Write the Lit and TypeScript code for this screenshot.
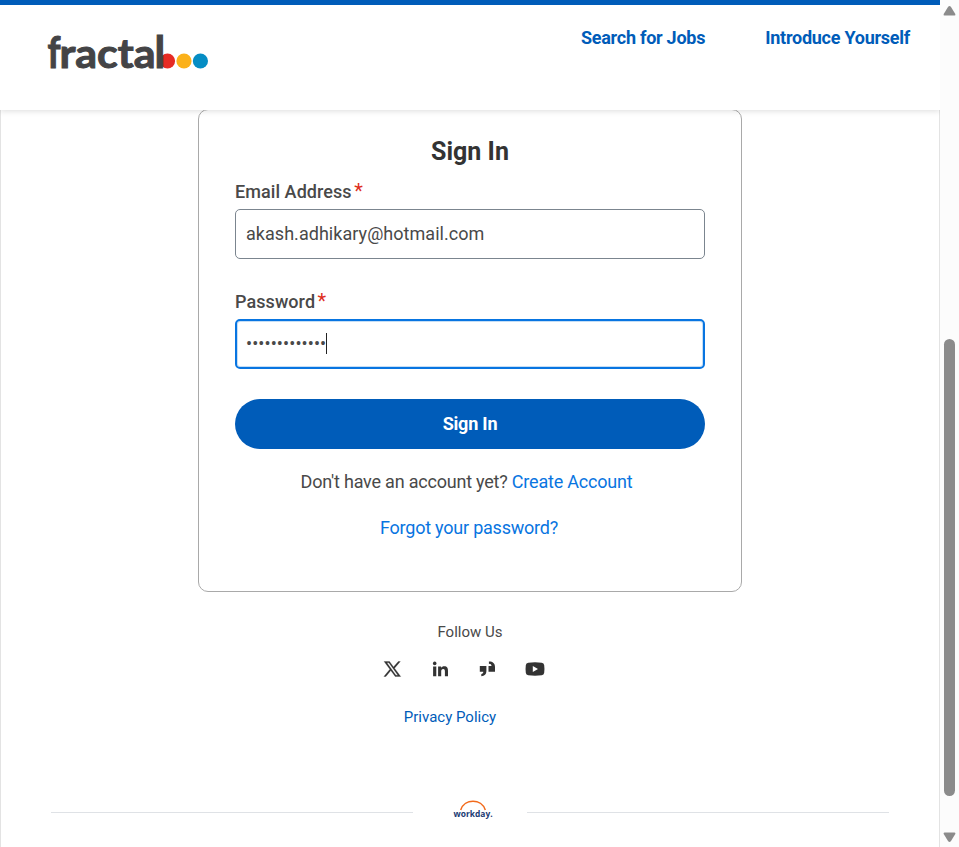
import { LitElement, html, css, svg } from "lit";
import { customElement } from "lit/decorators.js";

const socials = [
  {
    name: "X",
    art: svg`<path fill-rule="evenodd" d="M-.2 0H5.2L9.2 5.5L14 0H16L10.2 6.7L16.4 15H10.9L6.5 9L1.6 15H-.4L5.6 7.8ZM2.6 1.3L11.6 13.7H13.6L4.6 1.3Z" transform="translate(2.3 2.5)" stroke="#333" stroke-width=".3"/>`,
  },
  {
    name: "LinkedIn",
    art: svg`<circle cx="4.7" cy="4.4" r="1.8"/><path d="M3.1 7.4H6.3V17.3H3.1ZM8.1 7.4H11.1V8.8C11.7 7.8 12.8 7.2 14.2 7.2C17.2 7.2 18 9.1 18 11.9V17.3H14.9V12.4C14.9 11 14.7 9.9 13.2 9.9C11.7 9.9 11.2 11 11.2 12.4V17.3H8.1Z"/>`,
  },
  {
    name: "Glassdoor",
    art: svg`<path d="M2.8 6.9H9.4V12.3C9.4 15.3 7.6 17.2 4.3 17.2V15C5.6 14.9 6.3 14.2 6.3 12.8H2.8ZM11.9 2.6C15.7 2.5 18 4.5 18 8V12.8H11.5V6.9H14.5C14.5 5.5 13.6 4.9 11.9 4.8Z"/>`,
  },
  {
    name: "YouTube",
    art: svg`<path fill-rule="evenodd" d="M3.3 3.7Q10 3 16.7 3.7Q19 4 19.2 6.3Q19.7 10 19.2 13.7Q19 16 16.7 16.3Q10 17 3.3 16.3Q1 16 .8 13.7Q.3 10 .8 6.3Q1 4 3.3 3.7ZM7.8 6.9V13.1L13 10Z"/>`,
  },
];

@customElement("app-root")
export class AppRoot extends LitElement {
  static styles = css`
    :host {
      display: flex;
      height: 847px;
      overflow: hidden;
      background: #fff;
      color: #494949;
      font: 18px/24px Roboto, sans-serif;
    }
    * { box-sizing: border-box; }
    svg { display: block; }
    a { color: #0875e1; text-decoration: none; }
    .page { width: 940px; display: flex; flex-direction: column; }
    .header {
      height: 110px;
      flex: none;
      display: flex;
      justify-content: space-between;
      padding: 0 30px 0 40px;
      border-top: 5px solid #005cb9;
      background: #fff;
      box-shadow: 0 1px 6px rgba(0, 0, 0, 0.14);
      position: relative;
      z-index: 1;
    }
    .brand { margin-top: 20px; }
    .brand text { font: 700 40px Lato, sans-serif; fill: #444446; stroke: #444446; stroke-width: 1; }
    .brand .tall { font-size: 43px; }
    .nav { display: flex; gap: 60px; margin-top: 21px; }
    .nav a { color: #005cb9; font-weight: 700; letter-spacing: -0.25px; }
    .main {
      flex: 1;
      border: solid #e3e3e3;
      border-width: 0 1px;
      display: flex;
      flex-direction: column;
      align-items: center;
    }
    .card {
      width: 544px;
      height: 483px;
      flex: none;
      margin-top: -1px;
      padding: 24px 36px 0;
      border: 1px solid #a9a9a9;
      border-radius: 10px;
      text-align: center;
    }
    .title { margin: 0; font-size: 25px; line-height: 36px; font-weight: 700; color: #333; }
    .label { margin-top: 10px; text-align: left; font-weight: 500; letter-spacing: 0.07px; }
    .label + .field { margin-top: 5px; }
    .label.second { margin-top: 31px; }
    .required { color: #de2e21; font-size: 20px; line-height: 20px; font-weight: 400; margin-left: 2.5px; }
    .field {
      height: 50px;
      display: flex;
      align-items: center;
      padding: 0 10px;
      border: 1px solid #7b858f;
      border-radius: 5px;
      letter-spacing: 0.04px;
    }
    .field.focused {
      border: 2px solid #0875e1;
      padding: 0 9px;
      box-shadow: inset 0 0 0 1px #c5def5;
      letter-spacing: 0.1px;
    }
    .caret { width: 1px; height: 21px; margin-bottom: 1px; background: #222; }
    .submit {
      display: block;
      width: 100%;
      height: 50px;
      margin-top: 30px;
      border: 0;
      border-radius: 25px;
      background: #005cb9;
      color: #fff;
      font: 700 18px/24px Roboto, sans-serif;
      letter-spacing: -0.2px;
    }
    .account { margin: 21px 7px 0 0; letter-spacing: -0.21px; }
    .forgot { margin: 22px 2px 0 0; letter-spacing: -0.22px; }
    .follow { margin-top: 28px; font-size: 15px; }
    .socials { display: flex; gap: 27.6px; margin: 15px 13px 0 0; fill: #333; }
    .privacy { margin: 26px 40px 0 0; font-size: 15px; color: #005cb9; }
    .footer { width: 838px; display: flex; align-items: center; margin-top: 70px; }
    .line { flex: 1; height: 1px; background: #dfe2e6; }
    .footer svg { margin: 0 32px 0 39px; }
    .footer text { font: 700 9.5px "Open Sans", sans-serif; fill: #203b73; }
    .scrollbar {
      width: 19px;
      background: #fcfcfc;
      display: flex;
      flex-direction: column;
      align-items: center;
      padding: 6px 0 5px;
      fill: #8b8b8b;
      position: relative;
      z-index: 2;
    }
    .thumb { width: 11px; height: 457px; margin: 323px 0 auto; border-radius: 6px; background: #8b8b8b; }
  `;

  render() {
    return html`
      <div class="page">
        <header class="header">
          <svg class="brand" width="180" height="56" viewBox="0 0 180 56">
            <circle cx="127.5" cy="36" r="7.6" fill="#e62b25" />
            <text y="42.5"><tspan class="tall" x="7.5" textLength="13" lengthAdjust="spacingAndGlyphs">f</tspan></text>
            <text x="19.5" y="42.5" textLength="96" lengthAdjust="spacingAndGlyphs">racta</text>
            <text class="tall" x="114.5" y="42.5"><tspan class="tall">l</tspan></text>
            <circle cx="144" cy="36" r="7.6" fill="#fbb11a" />
            <circle cx="160.4" cy="36" r="7.6" fill="#058dc4" />
          </svg>
          <nav class="nav"><a>Search for Jobs</a><a>Introduce Yourself</a></nav>
        </header>
        <main class="main">
          <section class="card">
            <h2 class="title">Sign In</h2>
            <div class="label">Email Address<span class="required">*</span></div>
            <div class="field">akash.adhikary@hotmail.com</div>
            <div class="label second">Password<span class="required">*</span></div>
            <div class="field focused">${"•".repeat(13)}<span class="caret"></span></div>
            <button class="submit">Sign In</button>
            <div class="account">Don't have an account yet? <a>Create Account</a></div>
            <div class="forgot"><a>Forgot your password?</a></div>
          </section>
          <div class="follow">Follow Us</div>
          <div class="socials">
            ${socials.map(
              (s) => html`<svg width="20" height="20" viewBox="0 0 20 20" aria-label=${s.name}>${s.art}</svg>`
            )}
          </div>
          <a class="privacy">Privacy Policy</a>
          <footer class="footer">
            <span class="line"></span>
            <svg width="43" height="26" viewBox="0 0 43 26">
              <path d="M8.7 11C12.5 -.6 29.5 -.6 33.3 11" fill="none" stroke="#f26a1b" stroke-width="1.5" />
              <text x="1.6" y="17.5" textLength="39" lengthAdjust="spacingAndGlyphs">workday.</text>
            </svg>
            <span class="line"></span>
          </footer>
        </main>
      </div>
      <aside class="scrollbar">
        <svg width="13" height="10" viewBox="0 0 13 10"><path d="M6.5 0Q7.2 0 8 1L12.3 8Q12.8 9.5 11.5 9.5H1.5Q.2 9.5 .7 8L5 1Q5.8 0 6.5 0Z" /></svg>
        <div class="thumb"></div>
        <svg width="13" height="10" viewBox="0 0 13 10"><path d="M6.5 10Q7.2 10 8 9L12.3 2Q12.8 .5 11.5 .5H1.5Q.2 .5 .7 2L5 9Q5.8 10 6.5 10Z" /></svg>
      </aside>
    `;
  }
}
